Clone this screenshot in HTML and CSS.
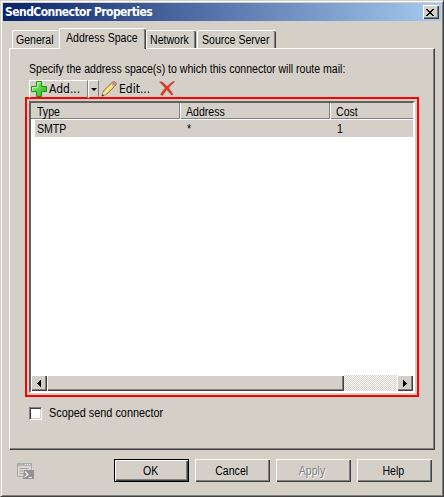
FILE: index.html
```html
<!DOCTYPE html>
<html lang="en">
<head>
<meta charset="utf-8">
<title>SendConnector Properties</title>
<link rel="stylesheet" href="styles.css">
</head>
<body>
<div class="window">
  <header class="titlebar">
    <h1>SendConnector Properties</h1>
    <button class="close" aria-label="Close"><svg width="8" height="7" viewBox="0 0 8 7" shape-rendering="crispEdges"><path d="M0 0h2v1h1v1h2V1h1V0h2v1H7v1H6v1H5v1h1v1h1v1h1v1H6V6H5V5H3v1H2v1H0V6h1V5h1V4h1V3H2V2H1V1H0z"/></svg></button>
  </header>
  <nav class="tabs">
    <div class="tab general"><span class="label">General</span></div>
    <div class="tab active"><span class="label">Address Space</span></div>
    <div class="tab network"><span class="label">Network</span></div>
    <div class="tab source"><span class="label">Source Server</span></div>
  </nav>
  <main class="panel">
    <p class="intro"><span class="label">Specify the address space(s) to which this connector will route mail:</span></p>
    <div class="toolbar">
      <div class="add">
        <svg width="18" height="18" viewBox="0 0 18 18"><defs><linearGradient id="g" x1="0" y1="0" x2="1" y2="1"><stop offset="0" stop-color="#b4f59a"/><stop offset=".5" stop-color="#58d53f"/><stop offset="1" stop-color="#2fae22"/></linearGradient></defs><path d="M6.500 1.500h5v5h5v5h-5v5h-5v-5h-5v-5h5z" fill="url(#g)" stroke="#1f8f1c" stroke-linejoin="round"/><path d="M7.500 7.500v-5h3M2.500 10.500v-3h5" fill="none" stroke="#d3fbc4" opacity=".8"/></svg>
        <span>Add...</span>
      </div>
      <div class="drop"><i></i></div>
      <svg class="pencil" width="16" height="16" viewBox="0 0 16 16"><path d="M1 15l1.500-5L11 1.500l3.500 3L6 13z" fill="#f4d264" stroke="#8b7436"/><path d="M4 11.500L12 3" stroke="#fff0aa" stroke-width="1.500"/><path d="M10 2.500L11.800.7q1.200-.8 2.700.600t.700 2.500L13.500 5.500z" fill="#d98a80" stroke="#a06a62" stroke-width=".7"/><path d="M10 2.500l3.500 3" stroke="#b9bcc0" stroke-width="1.300"/><path d="M1 15l1.300-4.300L5.500 13z" fill="#ead8b6"/><path d="M.6 15.500l.8-2.500 1.700 1.400z" fill="#333"/></svg>
      <span class="edit">Edit...</span>
      <svg class="delete" width="16" height="15" viewBox="0 0 16 15"><path d="M.500 1Q3 0 4.500 2L8 5.500Q11 2 15 .3L15.500 1Q12 3.500 9.500 7Q12 10 14 13.500L12.500 14Q10 11 7.800 8.700Q5 12 3.500 14.500L1.500 13.500Q3.500 10 6.200 7Q3.500 3.500.500 1z" fill="#dd3a25" stroke="#b8382a" stroke-width=".5"/></svg>
    </div>
    <section class="highlight">
      <div class="list">
        <div class="row head"><div class="cell"><span class="label">Type</span></div><div class="cell"><span class="label">Address</span></div><div class="cell"><span class="label">Cost</span></div></div>
        <div class="row item"><div class="cell"><span class="label">SMTP</span></div><div class="cell"><span class="label">*</span></div><div class="cell"><span class="label">1</span></div></div>
        <div class="space"></div>
        <div class="scroll">
          <div class="arrow"><svg width="4" height="7" viewBox="0 0 4 7" shape-rendering="crispEdges"><path d="M3 0h1v7H3V6H2V5H1V4H0V3h1V2h1V1h1z"/></svg></div>
          <div class="thumb"></div>
          <div class="track"></div>
          <div class="arrow"><svg width="4" height="7" viewBox="0 0 4 7" shape-rendering="crispEdges"><path d="M0 0h1v1h1v1h1v1h1v1H3v1H2v1H1v1H0z"/></svg></div>
        </div>
      </div>
    </section>
    <label class="check"><i></i><span class="label">Scoped send connector</span></label>
  </main>
  <footer class="footer">
    <svg class="script" width="17" height="17" viewBox="0 0 17 17"><path d="M.5.5h14v13H.5z" fill="#d9d8d5" stroke="#aaa"/><path d="M1 1h13v2H1z" fill="#b3b3b3"/><path d="M8 1.500h1M10 1.500h1M12 1.500h1" stroke="#eee"/><path d="M2.500 5.500h9M2.500 8h4M2.500 10.500h4" stroke="#a4a4a4"/><path d="M7 7h10v9H6z" fill="#929292"/><path d="M8 8.500l3 3-3.500 2.700M11.500 14.500h3.500" fill="none" stroke="#f2f2f2" stroke-width="1.200"/></svg>
    <div class="btn ok"><span class="label">OK</span></div>
    <div class="btn"><span class="label">Cancel</span></div>
    <div class="btn disabled"><span class="label">Apply</span></div>
    <div class="btn"><span class="label">Help</span></div>
  </footer>
</div>
</body>
</html>
```
FILE: styles.css
```css
* { box-sizing: border-box; }
body {
  margin: 0;
  font: 12px/14px "Liberation Sans", Arial, sans-serif;
  color: #000;
  overflow: hidden;
}
svg { display: block; flex: none; }
span { white-space: nowrap; }
/* Narrow dialog lettering */
.label {
  display: block;
  width: max-content;
  transform: scaleX(.88);
  transform-origin: 0 0;
}
.window {
  width: 444px;
  height: 497px;
  padding: 1px;
  display: flex;
  flex-direction: column;
  background: #d4d0c8;
  border: 1px solid;
  border-color: #d4d0c8 #404040 #404040 #d4d0c8;
  box-shadow: inset 1px 1px #fff, inset -1px -1px #808080;
}
.titlebar {
  height: 18px;
  margin: 1px 1px 0;
  padding: 0 2px;
  display: flex;
  align-items: center;
  justify-content: space-between;
  background: linear-gradient(90deg, #0a246a, #a6caf0);
}
h1 {
  margin: 0;
  font: bold 12px/18px "DejaVu Sans Condensed", "DejaVu Sans", sans-serif;
  letter-spacing: -0.55px;
  color: #fff;
}
.close {
  width: 16px;
  height: 14px;
  padding: 0 0 0 3px;
  border: 0;
  background: #d4d0c8;
  box-shadow: inset 1px 1px #fff, inset -1px -1px #404040, inset -2px -2px #808080;
}
.tabs {
  height: 20px;
  margin: 7px 0 0 10px;
  display: flex;
  align-items: flex-end;
}
.tab {
  height: 18px;
  padding: 2px 0 0 4px;
  border-top: 1px solid #fff;
  border-left: 1px solid #fff;
  border-radius: 2px 2px 0 0;
}
.general { width: 47px; padding-left: 3px; }
.active {
  width: 87px;
  height: 21px;
  padding-left: 6px;
  margin-bottom: -1px;
  background: #d4d0c8;
  z-index: 1;
}
.network { width: 50px; padding-left: 3px; }
.source { width: 79px; margin-left: 1px; }
.active, .network, .source { box-shadow: inset -1px 0 #404040, inset -2px 0 #808080; }
.panel {
  width: 426px;
  height: 402px;
  margin-left: 7px;
  padding: 13px 0 0 15px;
  border: 1px solid;
  border-color: #fff #404040 #404040 #fff;
  box-shadow: inset -1px -1px #808080;
}
.intro { margin: 0 0 0 4px; height: 18px; }
.toolbar {
  height: 17px;
  padding-left: 4px;
  display: flex;
  align-items: center;
  font: 12px/17px "DejaVu Sans Condensed", sans-serif;
}
.add {
  width: 59px;
  height: 18px;
  display: flex;
  align-items: center;
  gap: 1px;
  border-top: 1px solid #fff;
  border-left: 1px solid #fff;
  border-right: 1px solid #808080;
}
.drop {
  width: 11px;
  height: 18px;
  display: grid;
  place-items: center;
  border: solid;
  border-width: 1px 1px 0;
  border-color: #fff #808080 #808080 #fff;
}
.drop i { border: 3px solid transparent; border-top-color: #000; border-bottom: 0; }
.pencil { margin: 0 2px; }
.edit { width: 39px; padding-top: 2px; }
.delete { margin-left: 1px; }
.highlight {
  width: 394px;
  height: 300px;
  padding: 2px;
  border: 2px solid #f00;
}
.list {
  width: 386px;
  height: 292px;
  display: flex;
  flex-direction: column;
  background: #fff;
  border: 2px solid;
  border-color: #606060 #fff #fff #606060;
}
.row { display: grid; grid-template-columns: 149px 150px 1fr; }
.head {
  height: 16px;
  background: #d4d0c8;
  box-shadow: inset 0 -1px #808080;
}
.head .cell { padding: 2px 0 0 6px; border-right: 1px solid #808080; box-shadow: inset 1px 0 #fff; }
.head .cell:first-child { box-shadow: none; }
.head .cell:last-child { border-right: 0; }
.item { height: 17px; margin: 1px 0 0 4px; background: #d4d0c8; padding-top: 2px; }
.item .cell { padding-left: 2px; }
.item .cell + .cell { padding-left: 3px; }
.space { flex: 1; }
.scroll { height: 16px; display: flex; background: #d4d0c8; }
.arrow { width: 16px; display: grid; place-items: center; }
.arrow, .thumb { box-shadow: inset 1px 1px #fff, inset -1px -1px #404040, inset -2px -2px #808080; }
.thumb { width: 297px; }
.track { flex: 1; background: repeating-conic-gradient(#fff 0 25%, #d4d0c8 0 50%) 0 0 / 2px 2px; }
.check { display: flex; align-items: center; margin: 9px 0 0 4px; height: 14px; gap: 7px; }
.check .label { transform: scaleX(.905); }
.check i {
  width: 13px;
  height: 13px;
  background: #fff;
  border: 1px solid;
  border-color: #808080 #fff #fff #808080;
  box-shadow: inset 1px 1px #404040, inset -1px -1px #d4d0c8;
}
.footer { display: flex; gap: 6px; padding: 9px 0 0 15px; }
.script { margin: 4px 74px 0 0; }
.btn {
  width: 75px;
  height: 23px;
  padding-right: 2px;
  display: grid;
  place-items: center;
  box-shadow: inset 1px 1px #fff, inset -1px -1px #404040, inset -2px -2px #808080;
}
.btn .label { transform-origin: 50% 0; }
.ok { border: 1px solid #000; }
.disabled { color: #808080; text-shadow: 1px 1px #fff; }
```
